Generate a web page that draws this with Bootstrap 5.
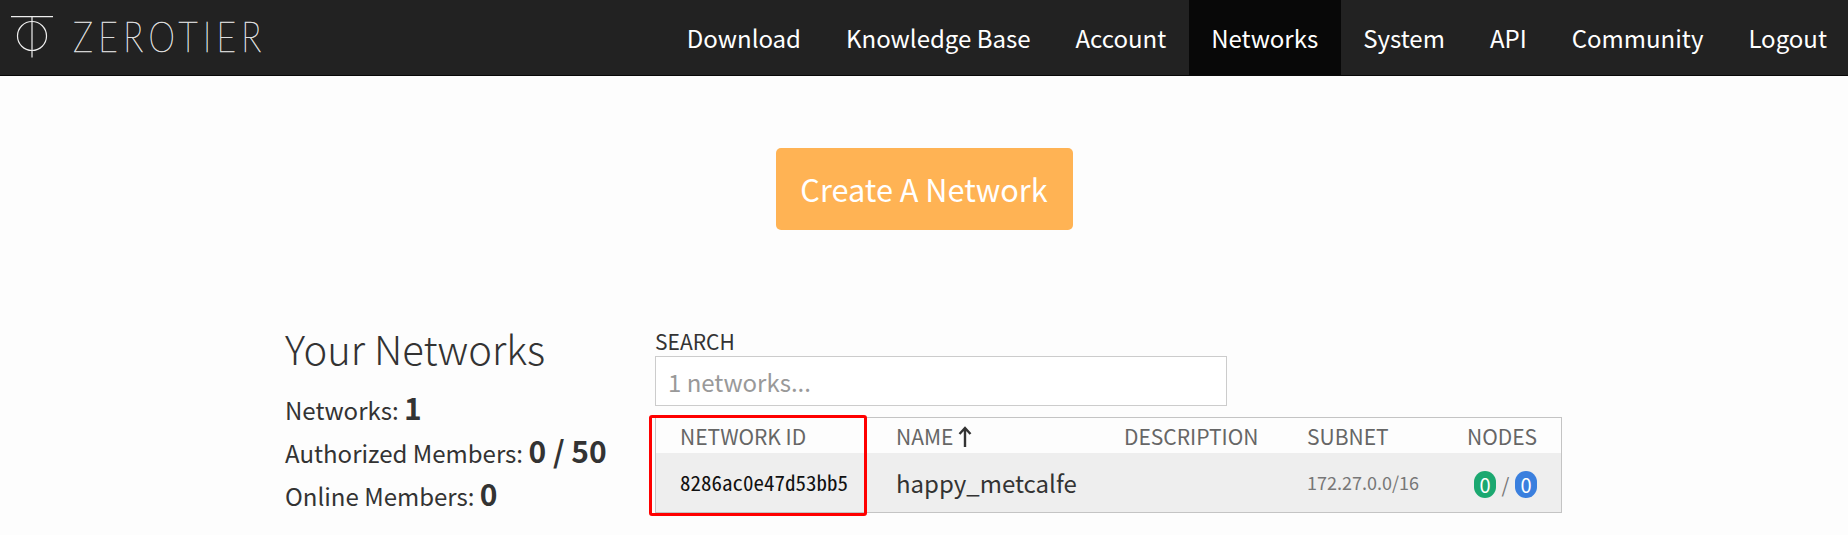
<!DOCTYPE html>
<html lang="en"><head><meta charset="utf-8"><title>ZeroTier</title>
<link href="https://cdn.jsdelivr.net/npm/bootstrap@5.3.0/dist/css/bootstrap.min.css" rel="stylesheet">
<style>
:root{--zt-font:"Noto Sans CJK SC","Noto Sans CJK JP","Noto Sans",sans-serif;}
html,body{height:535px;overflow:hidden;}
body{background:#fdfdfd;color:#333;font-family:var(--zt-font);font-size:24px;}
.zt-nav{height:76px;background:#222;border-bottom:1px solid #080808;padding:0;}
.zt-logo{display:flex;align-items:center;color:#ddd;text-decoration:none;padding-left:10px;gap:19px;}
.zt-word{font-family:Lato,sans-serif;font-weight:100;font-size:41px;letter-spacing:6.500px;line-height:1;padding-bottom:2px;transform:scaleX(.82);transform-origin:left center;-webkit-text-stroke:.7px #ddd;}
.zt-links{gap:0;margin-right:-1.500px;}
.zt-links .nav-link{height:75px;display:flex;align-items:center;padding:0 22.500px;color:#fff;font-size:24px;}
.zt-links .nav-link.active{background:#080808;color:#fff;}
.zt-create{display:block;width:297px;height:82px;margin:72px auto 0;background:#ffb354;border:0;border-radius:5px;color:#fff;font-size:30.700px;padding:0;}
.zt-body{margin-top:92px;padding-left:285px;}
.zt-side{width:370px;}
.zt-side h1{font-size:40px;font-weight:300;margin:0 0 20px;line-height:48px;padding-top:2px;color:#333;}
.zt-side p{margin:0 0 7px;font-size:24px;line-height:36px;}
.zt-side b{font-size:30px;font-weight:700;line-height:1;}
.zt-main{width:907px;padding-top:7px;}
.zt-label{font-size:21px;line-height:24px;color:#333;}
.zt-search{width:572px;height:50px;border:1px solid #ccc;border-radius:0;font-size:24px;padding:0 12px;background:#fff;box-shadow:none;margin-top:3px;}
.zt-search::placeholder{color:#999;}
.zt-tablewrap{position:relative;margin-top:11px;}
.zt-grid{width:907px;table-layout:fixed;margin:0;border:1px solid #c4c4c4;border-collapse:separate;border-spacing:0;--bs-table-bg:transparent;}
.zt-grid th,.zt-grid td{padding:0 0 0 24px;border:0;vertical-align:middle;}
.zt-grid th{height:35px;padding-top:3px;font-size:21px;font-weight:400;color:#666;}
.zt-grid td{height:59px;background:#eee;}
.zt-grid .zt-id{font-family:"Noto Sans Mono CJK SC","DejaVu Sans Mono",monospace;font-size:21px;color:#111;}
.zt-grid .zt-name{font-size:24px;color:#333;}
.zt-grid .zt-subnet{font-size:18px;color:#777;}
.zt-grid .zt-pills{padding-left:31px;}
.zt-grid .zt-sub-h,.zt-grid .zt-subnet{padding-left:25px;}
.zt-pill{display:inline-block;width:22px;height:27px;border-radius:11px;color:#fff;text-align:center;font-size:20px;line-height:27px;}
.zt-green{background:#1ba870;}
.zt-blue{background:#3a7fde;}
.zt-slash{display:inline-block;width:19px;text-align:center;color:#777;font-size:20px;}
.zt-mark{position:absolute;left:-6px;top:-2px;width:218px;height:101px;border:3px solid #f00;border-radius:3px;pointer-events:none;}
.zt-arrow{vertical-align:-3px;margin-left:5px;}
</style></head><body>
<nav class="navbar zt-nav">
<div class="d-flex justify-content-between align-items-center w-100 h-100">
<a class="zt-logo" href="#"><svg width="44" height="44" viewBox="0 0 44 44" fill="none" stroke="#eee" stroke-width="1.2"><path d="M1 .6h42M22 .6v41"/><circle cx="22" cy="20" r="14.500"/></svg><span class="zt-word">ZEROTIER</span></a>
<ul class="nav zt-links">
<li class="nav-item"><a class="nav-link" href="#">Download</a></li>
<li class="nav-item"><a class="nav-link" href="#">Knowledge Base</a></li>
<li class="nav-item"><a class="nav-link" href="#">Account</a></li>
<li class="nav-item"><a class="nav-link active" href="#">Networks</a></li>
<li class="nav-item"><a class="nav-link" href="#">System</a></li>
<li class="nav-item"><a class="nav-link" href="#">API</a></li>
<li class="nav-item"><a class="nav-link" href="#">Community</a></li>
<li class="nav-item"><a class="nav-link" href="#">Logout</a></li>
</ul></div></nav>
<button class="btn zt-create" type="button">Create A Network</button>
<div class="d-flex zt-body">
<div class="zt-side"><h1>Your Networks</h1>
<p>Networks: <b>1</b></p><p>Authorized Members: <b>0 / 50</b></p><p>Online Members: <b>0</b></p></div>
<div class="zt-main">
<div class="zt-label">SEARCH</div>
<input class="form-control zt-search" placeholder="1 networks...">
<div class="zt-tablewrap">
<table class="table zt-grid"><colgroup><col style="width:216px"><col style="width:228px"><col style="width:182px"><col style="width:161px"><col style="width:118px"></colgroup>
<thead><tr><th>NETWORK ID</th><th>NAME<svg class="zt-arrow" width="14" height="22" viewBox="0 0 14 22" fill="none" stroke="#333" stroke-width="2.400"><path d="M7 21V2M1.500 8 7 2l5.500 6"/></svg></th><th>DESCRIPTION</th><th class="zt-sub-h">SUBNET</th><th>NODES</th></tr></thead>
<tbody><tr><td class="zt-id">8286ac0e47d53bb5</td><td class="zt-name">happy_metcalfe</td><td></td><td class="zt-subnet">172.27.0.0/16</td><td class="zt-pills"><span class="zt-pill zt-green">0</span><span class="zt-slash">/</span><span class="zt-pill zt-blue">0</span></td></tr></tbody></table>
<div class="zt-mark"></div>
</div></div></div>
</body></html>
